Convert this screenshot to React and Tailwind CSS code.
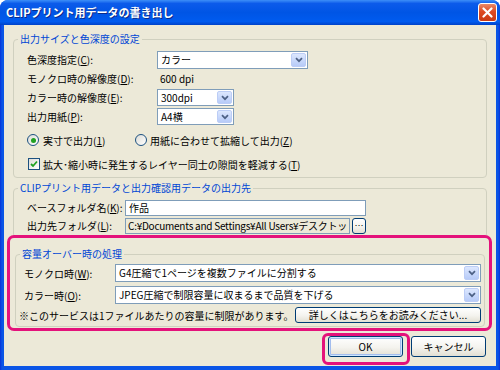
const font = "font-['Noto_Sans_CJK_JP','Noto_Sans',sans-serif]";

function Chevron() {
  return (
    <svg width="8" height="6" viewBox="0 0 8 6">
      <path d="M1 1.2 L4 4.2 L7 1.2" stroke="#4D6185" strokeWidth="1.7" fill="none" />
    </svg>
  );
}

function Combo({ children, className }) {
  return (
    <div className={`flex items-stretch border border-[#7F9DB9] bg-white p-[1px] ${className}`}>
      <div className="flex flex-1 items-center overflow-hidden whitespace-nowrap pl-[2px] leading-none">{children}</div>
      <div className="flex w-[15px] items-center justify-center rounded-[2px] border border-[#BCCDF6] bg-[linear-gradient(#DCE7FE,#B7CBF8)]">
        <Chevron />
      </div>
    </div>
  );
}

function Mn({ children }) {
  return <span className="underline underline-offset-[1px]">{children}</span>;
}

function Group({ title, className, boxClass, children }) {
  return (
    <div className={className}>
      <div className="relative z-10 ml-[5px] w-fit bg-[#ECE9D8] px-[2px] leading-[12px] text-[#0046D5]">{title}</div>
      <div className={`-mt-[6px] rounded-[4px] border border-[#D0D0BF] ${boxClass}`}>{children}</div>
    </div>
  );
}

function XpButton({ children, className }) {
  return (
    <div className={`flex items-center justify-center rounded-[3px] border border-[#003C74] bg-[linear-gradient(#FFFFFF,#F4F3EE_55%,#E2DFD3)] leading-none ${className}`}>
      {children}
    </div>
  );
}

export default function App() {
  return (
    <div className={`${font} flex h-[370px] w-[500px] flex-col overflow-hidden rounded-t-[8px] bg-[linear-gradient(to_right,#0831D9,#0A55E6_2px,#0A55E6_calc(100%-2px),#0831D9)] text-[10px] text-black`}>
      {/* title bar */}
      <div className="flex h-[25px] items-center justify-between bg-[linear-gradient(#3D8FF8,#0C5BEA_14%,#0055E5_50%,#005BEF_86%,#0042C8)] pl-[6px] pr-[3px]">
        <span className="text-[11px] font-bold leading-none text-white [text-shadow:1px_1px_#0A2A8A]">CLIPプリント用データの書き出し</span>
        <div className="flex h-[19px] w-[19px] items-center justify-center rounded-[3px] border border-white bg-[linear-gradient(#E98A6A,#DD4A22_45%,#C93A14)]">
          <svg width="11" height="11" viewBox="0 0 11 11">
            <path d="M1.5 1.5 L9.5 9.5 M9.5 1.5 L1.5 9.5" stroke="white" strokeWidth="2.2" strokeLinecap="round" />
          </svg>
        </div>
      </div>

      {/* body */}
      <div className="relative mx-[4px] mb-[4px] flex flex-1 flex-col bg-[#ECE9D8]">
        <Group title="出力サイズと色深度の設定" className="mx-[9px] mt-[8px]" boxClass="pl-[13px] pt-[10px] pb-[4px]">
          <div className="flex h-[19px] items-center">
            <span className="w-[130px]">色深度指定(<Mn>C</Mn>):</span>
            <Combo className="h-[18px] w-[151px]">カラー</Combo>
          </div>
          <div className="flex h-[19px] items-center">
            <span className="w-[130px]">モノクロ時の解像度(<Mn>D</Mn>):</span>
            <span className="pl-[3px]">600 dpi</span>
          </div>
          <div className="flex h-[19px] items-center">
            <span className="w-[130px]">カラー時の解像度(<Mn>E</Mn>):</span>
            <Combo className="h-[17px] w-[77px]">300dpi</Combo>
          </div>
          <div className="flex h-[19px] items-center">
            <span className="w-[130px]">出力用紙(<Mn>P</Mn>):</span>
            <Combo className="h-[17px] w-[77px]">A4横</Combo>
          </div>
          <div className="mt-[5px] flex h-[18px] items-center">
            <div className="flex w-[108px] items-center gap-[4px]">
              <div className="flex h-[12px] w-[12px] items-center justify-center rounded-full border border-[#1C5180] bg-[linear-gradient(135deg,#DCDCD7,#FFFFFF)]">
                <div className="h-[5px] w-[5px] rounded-full bg-[#21A121]" />
              </div>
              <span>実寸で出力(<Mn>1</Mn>)</span>
            </div>
            <div className="flex items-center gap-[3px]">
              <div className="h-[12px] w-[12px] rounded-full border border-[#1C5180] bg-[linear-gradient(135deg,#DCDCD7,#FFFFFF)]" />
              <span>用紙に合わせて拡縮して出力(<Mn>Z</Mn>)</span>
            </div>
          </div>
          <div className="mt-[6px] flex h-[18px] items-center gap-[3px] pl-[1px]">
            <div className="flex h-[12px] w-[12px] items-center justify-center border border-[#1C5180] bg-[linear-gradient(135deg,#DCDCD7,#FFFFFF)]">
              <svg width="8" height="8" viewBox="0 0 8 8">
                <path d="M1 4 L3 6 L7 1.5" stroke="#21A121" strokeWidth="1.8" fill="none" />
              </svg>
            </div>
            <span>拡大･縮小時に発生するレイヤー同士の隙間を軽減する(<Mn>T</Mn>)</span>
          </div>
        </Group>

        <Group title="CLIPプリント用データと出力確認用データの出力先" className="mx-[9px] mt-[4px]" boxClass="pl-[13px] pt-[10px] pb-[3px]">
          <div className="flex h-[17px] items-center">
            <span className="w-[98px]">ベースフォルダ名(<Mn>K</Mn>):</span>
            <div className="flex h-[16px] w-[241px] items-center border border-[#7F9DB9] bg-white pl-[3px] leading-none">作品</div>
          </div>
          <div className="mt-[1px] flex h-[17px] items-center">
            <span className="w-[98px]">出力先フォルダ(<Mn>L</Mn>):</span>
            <div className="flex h-[16px] w-[225px] items-center overflow-hidden whitespace-nowrap border border-[#7F9DB9] bg-[#ECE9D8] pl-[2px] leading-none tracking-[-0.25px]">
              C:¥Documents and Settings¥All Users¥デスクトッ
            </div>
            <XpButton className="ml-[2px] h-[16px] w-[14px] text-[9px]">…</XpButton>
          </div>
        </Group>

        <Group title="容量オーバー時の処理" className="mx-[11px] mt-[10px]" boxClass="pl-[3px] pr-[3px] pt-[9px] pb-[3px]">
          <div className="flex h-[18px] items-center pl-[5px]">
            <span className="w-[91px]">モノクロ時(<Mn>W</Mn>):</span>
            <Combo className="h-[18px] flex-1">G4圧縮で1ページを複数ファイルに分割する</Combo>
          </div>
          <div className="mt-[4px] flex h-[18px] items-center pl-[5px]">
            <span className="w-[91px]">カラー時(<Mn>O</Mn>):</span>
            <Combo className="h-[18px] flex-1">JPEG圧縮で制限容量に収まるまで品質を下げる</Combo>
          </div>
          <div className="mt-[3px] flex h-[16px] items-center justify-between">
            <span>※このサービスは1ファイルあたりの容量に制限があります。</span>
            <XpButton className="h-[16px] w-[186px]">詳しくはこちらをお読みください...</XpButton>
          </div>
        </Group>

        <div className="mt-[9px] flex justify-end gap-[8px] pr-[10px]">
          <XpButton className="h-[21px] w-[75px] shadow-[inset_0_0_0_1px_#CEE7FF,inset_0_0_0_2px_#A3BDEE]">OK</XpButton>
          <XpButton className="h-[21px] w-[75px]">キャンセル</XpButton>
        </div>

        {/* annotation highlights */}
        <div className="pointer-events-none absolute left-[3px] top-[210px] h-[96px] w-[485px] rounded-[7px] border-[3px] border-[#E4127B]" />
        <div className="pointer-events-none absolute left-[318px] top-[308px] h-[32px] w-[88px] rounded-[6px] border-[3px] border-[#E4127B]" />
      </div>
    </div>
  );
}
